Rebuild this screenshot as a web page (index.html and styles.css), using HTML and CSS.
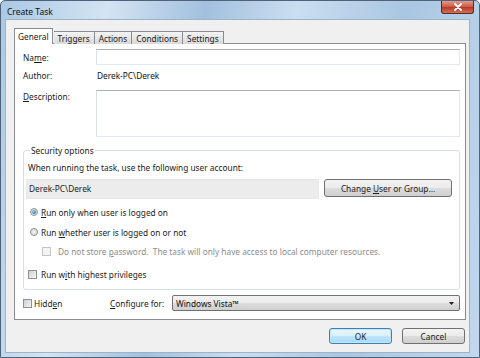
FILE: index.html
```html
<!DOCTYPE html>
<html lang="en">
<head>
    <meta charset="UTF-8">
    <meta name="viewport" content="width=device-width, initial-scale=1.0">
    <title>Create Task</title>
    <link rel="stylesheet" href="styles.css">
</head>
<body>
    <div class="window">
        <div class="titlebar">
            <span class="title">Create Task</span>
            <div class="close-btn">
                <svg width="10" height="8" viewBox="0 0 10 8">
                    <path d="M2 1 L8 7 M8 1 L2 7" stroke="#ffffff" stroke-width="1.8" stroke-linecap="round"/>
                </svg>
            </div>
        </div>
        <div class="client">
            <div class="tabs">
                <div class="tab active">General</div>
                <div class="tab">Triggers</div>
                <div class="tab">Actions</div>
                <div class="tab">Conditions</div>
                <div class="tab">Settings</div>
            </div>
            <div class="panel">
                <div class="row name-row">
                    <span class="label">Na<u>m</u>e:</span>
                    <div class="textbox"></div>
                </div>
                <div class="row author-row">
                    <span class="label">Author:</span>
                    <span class="value">Derek-PC\Derek</span>
                </div>
                <div class="row desc-row">
                    <span class="label"><u>D</u>escription:</span>
                    <div class="textbox textarea"></div>
                </div>

                <fieldset class="group">
                    <legend>Security options</legend>
                    <div class="group-text">When running the task, use the following user account:</div>
                    <div class="user-row">
                        <div class="user-field">Derek-PC\Derek</div>
                        <div class="button change-btn"><span>Change <u>U</u>ser or Group...</span></div>
                    </div>
                    <div class="option radio-1">
                        <span class="radio checked"></span>
                        <span><u>R</u>un only when user is logged on</span>
                    </div>
                    <div class="option radio-2">
                        <span class="radio"></span>
                        <span>Run <u>w</u>hether user is logged on or not</span>
                    </div>
                    <div class="option sub-option disabled">
                        <span class="checkbox"></span>
                        <span>Do not store <u>p</u>assword.&nbsp; The task will only have access to local computer resources.</span>
                    </div>
                    <div class="option check-high">
                        <span class="checkbox"></span>
                        <span>Run w<u>i</u>th highest privileges</span>
                    </div>
                </fieldset>

                <div class="bottom-row">
                    <div class="option hidden-opt">
                        <span class="checkbox"></span>
                        <span>Hidd<u>e</u>n</span>
                    </div>
                    <span class="configure-label"><u>C</u>onfigure for:</span>
                    <div class="combo">
                        <span>Windows Vista™</span>
                        <svg width="5" height="3" viewBox="0 0 5 3"><path d="M0 0 H5 L2.5 3 Z" fill="#222"/></svg>
                    </div>
                </div>
            </div>
            <div class="buttons">
                <div class="button default-btn">OK</div>
                <div class="button">Cancel</div>
            </div>
        </div>
    </div>
</body>
</html>
```

FILE: styles.css
```css
body {
    margin: 0;
    background: #ffffff;
    font-family: 'Noto Sans', 'Open Sans', sans-serif;
    font-size: 8.3px;
    color: #1b1b1b;
}
u {
    text-decoration: underline;
    text-underline-offset: 1px;
}
.window {
    width: 480px;
    height: 358px;
    box-sizing: border-box;
    border: 1px solid #4d6379;
    border-radius: 5px 5px 0 0;
    background: linear-gradient(100deg, #abc8e4 0%, #d3e4f3 20%, #a2c0de 38%, #cadef0 55%, #a9c6e2 75%, #c1d8ee 100%);
    display: flex;
    flex-direction: column;
}
.titlebar {
    height: 18px;
    display: flex;
    justify-content: space-between;
    align-items: flex-start;
}
.title {
    padding: 5px 0 0 6px;
    font-size: 8.5px;
    color: #101010;
}
.close-btn {
    width: 31px;
    height: 12px;
    margin-right: 5px;
    border: 1px solid #5a2a24;
    border-top: none;
    border-radius: 0 0 3px 3px;
    background: linear-gradient(#e49a8c, #c9573f 50%, #b43a24 52%, #d0705a);
    display: flex;
    justify-content: center;
    align-items: center;
}
.client {
    margin: 0 9px 0 4px;
    height: 334px;
    background: #f0f0f0;
    border: 1px solid #9fb2c6;
    box-sizing: border-box;
    padding: 8px 4px 0 8px;
}
.tabs {
    display: flex;
    align-items: flex-end;
    height: 16px;
    position: relative;
    z-index: 1;
}
.tab {
    height: 13px;
    box-sizing: border-box;
    border: 1px solid #898c95;
    border-bottom: none;
    border-left: none;
    background: linear-gradient(#f4f4f4, #e6e6e6 50%, #d9d9d9);
    padding: 1px 4px 0;
    line-height: 11px;
    color: #1b1b1b;
}
.tab.active {
    height: 16px;
    border-left: 1px solid #898c95;
    background: #ffffff;
    padding: 2px 3px 0;
    margin-right: 1px;
}
.panel {
    width: 452px;
    height: 277px;
    margin-top: -1px;
    box-sizing: border-box;
    border: 1px solid #898c95;
    background: #ffffff;
    padding: 5px 5px 0 8px;
    display: flex;
    flex-direction: column;
}
.row {
    display: flex;
    align-items: center;
}
.label {
    width: 73px;
    flex-shrink: 0;
}
.textbox {
    flex: 1;
    height: 16px;
    box-sizing: border-box;
    border: 1px solid #e2e8ee;
    border-top-color: #abadb3;
    border-left-color: #dbdfe6;
}
.name-row {
    height: 16px;
}
.author-row {
    height: 12px;
    margin-top: 4px;
}
.value {
    padding-left: 1px;
    color: #111;
}
.desc-row {
    align-items: flex-start;
    margin-top: 9px;
}
.desc-row .label {
    padding-top: 1px;
}
.textarea {
    height: 47px;
}
.group {
    margin: 8px 0 0;
    padding: 0 6px 9px 4px;
    border: 1px solid #d5dfe5;
    border-radius: 3px;
}
.group legend {
    padding: 0 1px;
    margin-left: 2px;
    line-height: 11px;
    color: #1b1b1b;
}
.group-text {
    margin-top: 6px;
    line-height: 11px;
}
.user-row {
    display: flex;
    align-items: flex-start;
    margin: 6px 0 0 -2px;
}
.user-field {
    width: 293px;
    height: 20px;
    box-sizing: border-box;
    background: #ececec;
    border: 1px solid #e8e8e8;
    padding-left: 2px;
    line-height: 17px;
}
.button {
    height: 16px;
    width: 63px;
    box-sizing: border-box;
    border: 1px solid #707070;
    border-radius: 3px;
    background: linear-gradient(#f3f3f3, #ebebeb 50%, #dddddd 51%, #cfcfcf);
    display: flex;
    justify-content: center;
    align-items: center;
    color: #1b1b1b;
}
.change-btn {
    width: 128px;
    height: 18px;
    margin-left: 5px;
}
.option {
    display: flex;
    align-items: center;
    height: 12px;
}
.radio-1 {
    margin-top: 7px;
    padding-left: 2px;
}
.radio-2 {
    margin-top: 8px;
    padding-left: 2px;
}
.sub-option {
    margin-top: 7px;
    padding-left: 14px;
}
.check-high {
    margin-top: 11px;
}
.radio {
    width: 8px;
    height: 8px;
    box-sizing: border-box;
    border: 1px solid #8e8f8f;
    border-radius: 50%;
    background: radial-gradient(#f2f2f2, #d4d4d4);
    margin-right: 3px;
    display: flex;
    justify-content: center;
    align-items: center;
}
.radio.checked::after {
    content: '';
    width: 4px;
    height: 4px;
    border-radius: 50%;
    background: radial-gradient(circle at 35% 35%, #8ad0f5, #1b5b9a);
}
.checkbox {
    width: 9px;
    height: 9px;
    box-sizing: border-box;
    border: 1px solid #8e8f8f;
    background: linear-gradient(135deg, #cbcfd5, #f6f6f6);
    margin-right: 4px;
}
.sub-option .checkbox {
    margin-right: 7px;
}
.disabled {
    color: #8d8d8d;
}
.disabled .checkbox {
    border-color: #c4c4c4;
    background: #f4f4f4;
}
.bottom-row {
    display: flex;
    align-items: center;
    margin-top: 5px;
    height: 16px;
}
.hidden-opt {
    width: 87px;
}
.hidden-opt .checkbox {
    margin-right: 2px;
}
.configure-label {
    width: 62px;
}
.combo {
    flex: 1;
    height: 16px;
    box-sizing: border-box;
    border: 1px solid #707070;
    border-radius: 2px;
    background: linear-gradient(#f3f3f3, #ebebeb 50%, #dddddd 51%, #cfcfcf);
    display: flex;
    justify-content: space-between;
    align-items: center;
    padding: 0 5px 0 3px;
    color: #111;
}
.buttons {
    display: flex;
    justify-content: flex-end;
    gap: 10px;
    margin-top: 8px;
}
.default-btn {
    border-color: #3c7fb1;
    box-shadow: inset 0 0 0 1px #c3e6f8;
    background: linear-gradient(#eaf6fd, #d9f0fc 50%, #bee6fd 51%, #a7d9f5);
}
```
